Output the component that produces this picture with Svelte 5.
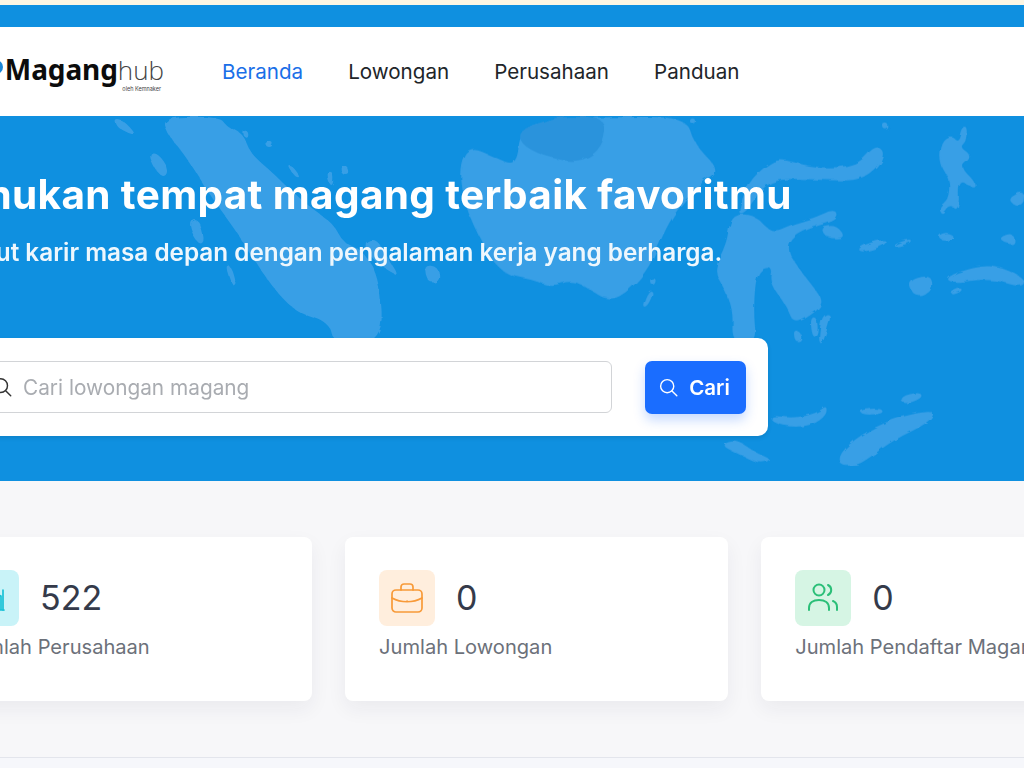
<script>
  const stats = [
    { label: "Jumlah Perusahaan", value: "522", tone: "teal", icon: "building" },
    { label: "Jumlah Lowongan", value: "0", tone: "orange", icon: "case" },
    { label: "Jumlah Pendaftar Magang", value: "0", tone: "green", icon: "users" },
  ];
  const links = ["Beranda", "Lowongan", "Perusahaan", "Panduan"];

  // midpoint smoothing so the islands don't look like polygons
  function blob(p) {
    let d = "";
    for (let i = 0; i < p.length; i++) {
      const a = p[i];
      const b = p[(i + 1) % p.length];
      const mx = (a[0] + b[0]) / 2;
      const my = (a[1] + b[1]) / 2;
      d += i === 0 ? `M${mx} ${my}` : `Q${a[0]} ${a[1]} ${mx} ${my}`;
    }
    const f = p[0];
    const s = p[1];
    return d + `Q${f[0]} ${f[1]} ${(f[0] + s[0]) / 2} ${(f[1] + s[1]) / 2}Z`;
  }

  // west part of the map
  const west = [
    [[190,20],[360,20],[380,50],[430,70],[450,130],[520,190],[560,230],[640,300],[700,340],[730,400],[790,420],[840,510],[850,700],[700,700],[690,640],[600,610],[550,570],[480,480],[420,380],[340,270],[290,190],[250,130],[200,70]],
    [[40,25],[70,30],[110,75],[85,70],[50,50]],
    [[145,130],[170,125],[205,175],[195,205],[165,180]],
    [[265,330],[295,325],[315,390],[300,405],[280,380]],
    [[375,465],[395,470],[410,525],[395,525]],
    [[430,60],[445,65],[445,85],[430,80]],
    [[495,95],[520,95],[515,112],[498,110]],
    [[560,165],[575,165],[605,205],[590,205]],
    [[680,185],[700,185],[700,225],[688,225]],
    [[720,165],[740,165],[752,195],[725,195]],
    [[790,395],[830,385],[860,440],[900,500],[860,480],[810,440]],
    [[970,465],[1015,470],[1020,515],[985,520]],
  ];
  const borneoDark = [[0,20],[140,20],[130,110],[60,160],[-50,140],[-120,100],[-120,60],[-40,30]];
  // east part of the map
  const east = [
    [[-300,170],[-270,110],[-200,140],[-130,170],[-120,60],[-40,30],[140,20],[380,20],[400,100],[480,180],[420,220],[350,300],[310,370],[270,470],[210,540],[150,575],[90,540],[40,510],[-30,530],[-80,510],[-180,490],[-250,370],[-290,270]],
    [[945,105],[975,125],[955,170],[900,210],[820,212],[700,205],[630,215],[590,255],[560,305],[530,315],[565,215],[620,165],[660,145],[740,168],[820,175],[900,160]],
    [[540,310],[590,320],[620,355],[650,365],[700,340],[760,325],[825,295],[838,330],[760,350],[700,380],[680,420],[720,480],[760,530],[795,580],[740,625],[700,640],[680,590],[630,520],[640,470],[590,480],[580,600],[590,700],[515,700],[520,600],[490,530],[460,480],[500,400],[510,330]],
    [[750,625],[770,620],[775,670],[758,685]],
    [[785,615],[815,610],[800,665],[785,705],[775,690]],
    [[700,660],[722,665],[725,692],[705,695]],
    [[780,352],[830,345],[858,385],[800,385]],
    [[895,410],[975,385],[980,405],[900,430]],
    [[1000,405],[1050,385],[1055,398],[1005,412]],
    [[1135,380],[1165,368],[1188,385],[1150,395]],
    [[1320,385],[1362,370],[1365,405],[1335,400]],
    [[1035,510],[1110,490],[1122,540],[1070,568]],
    [[1160,500],[1230,475],[1300,465],[1392,500],[1392,535],[1290,505],[1170,520]],
    [[1172,548],[1200,532],[1208,542],[1180,556]],
    [[630,915],[700,925],[770,910],[800,885],[800,915],[760,945],[700,952],[640,940]],
    [[900,898],[965,895],[970,912],[905,915]],
    [[1020,860],[1080,845],[1088,865],[1030,885]],
    [[840,1068],[838,1030],[900,975],[1000,925],[1130,897],[1105,940],[1000,990],[920,1050],[885,1068]],
    [[480,1005],[530,988],[590,1030],[637,1048],[600,1062],[540,1035]],
    [[245,590],[265,540],[282,545],[262,590]],
    [[270,505],[288,505],[285,525],[270,522]],
    [[968,40],[985,40],[985,58],[970,58]],
    [[390,25],[405,25],[405,40],[390,40]],
    [[1145,95],[1175,78],[1195,95],[1205,50],[1222,50],[1218,95],[1200,112],[1228,130],[1228,150],[1200,170],[1252,222],[1240,238],[1195,205],[1198,305],[1170,285],[1148,320],[1135,290],[1165,270],[1170,210],[1138,160]],
    [[1345,265],[1392,240],[1392,285],[1360,285]],
  ];
</script>

<div class="page">
  <div class="strip"></div>
  <div class="topbar"></div>

  <header class="nav">
    <div class="logo">
      <span class="mark"></span>
      <div class="word">
        <strong>Magang</strong><span class="hub">hub</span>
        <small>oleh Kemnaker</small>
      </div>
    </div>
    <nav>
      {#each links as link, i}
        <a href="#top" class:active={i === 0}>{link}</a>
      {/each}
    </nav>
  </header>

  <section class="hero">
    <svg class="map" viewBox="0 0 1024 365" width="1024" height="365" aria-hidden="true">
      <defs>
        <filter id="coast" x="0" y="0" width="100%" height="100%">
          <feTurbulence type="fractalNoise" baseFrequency="0.09" numOctaves="2" seed="4" />
          <feDisplacementMap in="SourceGraphic" scale="5" />
        </filter>
      </defs>
      <g filter="url(#coast)">
        <g transform="translate(100 -6) scale(0.3333)">
          {#each west as p}
            <path class="land" d={blob(p)} />
          {/each}
        </g>
        <g transform="translate(560 -6) scale(0.3333)">
          {#each east as p}
            <path class="land" d={blob(p)} />
          {/each}
          <path class="dark" d={blob(borneoDark)} />
        </g>
      </g>
    </svg>
    <div class="hero-text">
      <h1>Temukan tempat magang terbaik favoritmu</h1>
      <p>Sambut karir masa depan dengan pengalaman kerja yang berharga.</p>
    </div>
    <div class="search">
      <label class="field">
        <svg width="22" height="22" viewBox="0 0 24 24" fill="none" stroke="#333" stroke-width="1.6" stroke-linecap="round">
          <circle cx="10.500" cy="10.500" r="7.500" />
          <path d="M16 16l5.500 5.500" />
        </svg>
        <span>Cari lowongan magang</span>
      </label>
      <button type="button">
        <svg width="21" height="21" viewBox="0 0 24 24" fill="none" stroke="#fff" stroke-width="1.6" stroke-linecap="round">
          <circle cx="10.500" cy="10.500" r="7.500" />
          <path d="M16 16l5.500 5.500" />
        </svg>
        Cari
      </button>
    </div>
  </section>

  <section class="stats">
    {#each stats as s}
      <article class="card">
        <div class="top">
          <div class="icon {s.tone}">
            {#if s.icon === "building"}
              <svg width="32" height="32" viewBox="0 0 32 32" fill="none" stroke="currentColor" stroke-width="1.7" stroke-linecap="round" stroke-linejoin="round">
                <path d="M3 28h26M6 28V6l12-2v24M18 12l8 2v14M11 11h2M11 16h2M11 21h2" />
                <path d="M28 8v20" />
              </svg>
            {:else if s.icon === "case"}
              <svg width="32" height="32" viewBox="0 0 32 32" fill="none" stroke="currentColor" stroke-width="1.7" stroke-linecap="round" stroke-linejoin="round">
                <rect x="1" y="8" width="30" height="22" rx="4" />
                <path d="M10 8V5a3 3 0 0 1 3-3h6a3 3 0 0 1 3 3v3" />
                <path d="M1 16c9 5 21 5 30 0" />
                <path d="M16 19h.1" />
              </svg>
            {:else}
              <svg width="32" height="32" viewBox="0 0 32 32" fill="none" stroke="currentColor" stroke-width="2" stroke-linecap="round">
                <circle cx="12" cy="8" r="5.500" />
                <path d="M21 3a5.500 5.500 0 0 1 0 10" />
                <path d="M2 28v-2c0-5 4-8 10-8s10 3 10 8v2" />
                <path d="M26 19c2.500 1 4 3.500 4 6v3" />
              </svg>
            {/if}
          </div>
          <span class="value">{s.value}</span>
        </div>
        <div class="label">{s.label}</div>
      </article>
    {/each}
  </section>

  <div class="rule"></div>
</div>

<style>
  :global(body) {
    overflow: hidden;
    background: #f6f7fb;
  }
  :global(#app) {
    width: 1024px;
    height: 768px;
    overflow: hidden;
  }
  .page {
    width: 1216px;
    margin-left: -71px;
    font-family: Inter, "Liberation Sans", sans-serif;
    background: #f7f7f9;
  }
  .strip {
    height: 5px;
    background: #fdf6e3;
  }
  .topbar {
    height: 22px;
    background: #0f90e0;
  }
  .nav {
    height: 89px;
    background: #fff;
    display: flex;
    align-items: center;
    gap: 58px;
  }
  .logo {
    width: 235px;
    display: flex;
    justify-content: flex-end;
    align-items: center;
    gap: 2px;
  }
  .mark {
    width: 14px;
    height: 14px;
    margin-top: -9px;
    border-radius: 50%;
    background: #1a86d8;
  }
  .word {
    position: relative;
    white-space: nowrap;
    line-height: 1;
    margin-top: -6px;
  }
  .word strong {
    font-family: "Noto Sans", sans-serif;
    font-size: 28px;
    font-weight: 700;
    color: #0c0c0c;
    letter-spacing: -0.1px;
  }
  .hub {
    font-family: "Open Sans", sans-serif;
    font-weight: 300;
    font-size: 26px;
    color: #444;
  }
  .word small {
    position: absolute;
    right: 3px;
    top: 32px;
    font-size: 5.500px;
    line-height: 1;
    color: #444;
  }
  nav {
    display: flex;
    gap: 45px;
  }
  nav a {
    font-size: 20.6px;
    color: #212529;
    text-decoration: none;
  }
  nav a.active {
    color: #1a6fe8;
  }
  .hero {
    position: relative;
    height: 365px;
    background: #0f90e0;
    box-sizing: border-box;
    padding-top: 54px;
    overflow: hidden;
  }
  .map {
    position: absolute;
    left: 71px;
    top: 0;
  }
  .land {
    fill: #389fe6;
  }
  .dark {
    fill: #2a93dc;
  }
  .hero-text {
    position: relative;
    color: #fff;
  }
  h1 {
    margin: 0 0 0 -3px;
    font-size: 40.5px;
    line-height: 50px;
    font-weight: 700;
    letter-spacing: 0.36px;
  }
  .hero-text p {
    margin: 17px 0 0;
    font-size: 24.3px;
    line-height: 30px;
    font-weight: 600;
    color: #eef7fd;
  }
  .search {
    position: absolute;
    left: 0;
    top: 222px;
    width: 839px;
    height: 98px;
    box-sizing: border-box;
    padding: 23px 22px;
    background: #fff;
    border-radius: 10px;
    display: flex;
    justify-content: space-between;
    box-shadow: 0 2px 4px rgba(0, 0, 0, 0.1);
  }
  .field {
    width: 660px;
    margin-left: 1px;
    padding-left: 38px;
    box-sizing: border-box;
    border: 1px solid #d2d4d7;
    border-radius: 6px;
    display: flex;
    align-items: center;
    gap: 10px;
    font-size: 20.8px;
    color: #a9acb1;
  }
  button {
    width: 101px;
    height: 53px;
    border: none;
    border-radius: 7px;
    padding: 0 3px 0 0;
    background: #1a6dff;
    color: #fff;
    font: 600 20.5px Inter, "Liberation Sans", sans-serif;
    display: flex;
    align-items: center;
    justify-content: center;
    gap: 10px;
    box-shadow: 0 6px 12px rgba(26, 109, 255, 0.25);
  }
  .stats {
    display: flex;
    gap: 33.1px;
    padding-top: 56px;
  }
  .card {
    width: 383px;
    height: 164px;
    box-sizing: border-box;
    padding: 33px 34px;
    background: #fff;
    border-radius: 8px;
    box-shadow: 0 8px 20px rgba(30, 40, 60, 0.06);
  }
  .top {
    display: flex;
    align-items: center;
    gap: 21px;
  }
  .icon {
    width: 56px;
    height: 56px;
    border-radius: 8px;
    display: flex;
    align-items: center;
    justify-content: center;
  }
  .icon.teal {
    background: #c9f3f8;
    color: #17c1d6;
  }
  .icon.orange {
    background: #ffeedd;
    color: #f89a38;
  }
  .icon.green {
    background: #d6f5e4;
    color: #2bbf78;
  }
  .value {
    font-size: 34px;
    line-height: 54px;
    font-weight: 400;
    color: #343a4a;
  }
  .label {
    margin-top: 9px;
    font-size: 20.1px;
    line-height: 24px;
    color: #6c717a;
    white-space: nowrap;
  }
  .rule {
    margin-top: 56px;
    height: 11px;
    border-top: 1px solid #e3e5ec;
    background: #f6f7fb;
  }
</style>
